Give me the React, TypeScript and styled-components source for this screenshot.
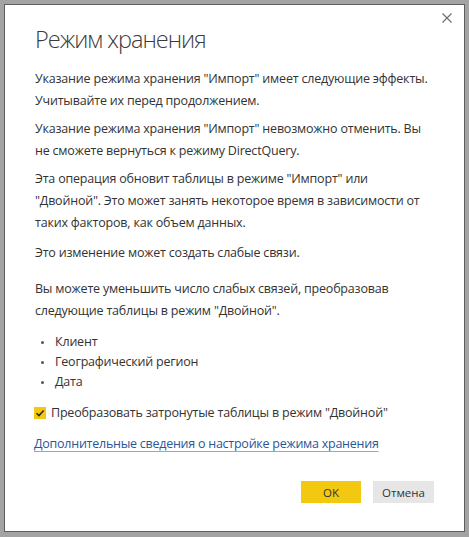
import React from "react";
import styled, { createGlobalStyle } from "styled-components";

const GlobalStyle = createGlobalStyle`
  html, body {
    margin: 0;
    padding: 0;
    background: #a3a3a3;
  }
  body {
    padding: 4px;
    font-family: "Open Sans", "Noto Sans", sans-serif;
  }
`;

const Dialog = styled.div`
  position: relative;
  box-sizing: border-box;
  width: 461px;
  height: 528px;
  background: #ffffff;
  border: 1px solid #5e5e5e;
  padding: 18px 20px 28px 30px;
  display: flex;
  flex-direction: column;
  color: #333333;
`;

const CloseButton = styled.button`
  position: absolute;
  top: 8px;
  right: 12px;
  width: 10px;
  height: 10px;
  padding: 0;
  border: none;
  background: transparent;
  display: block;
  cursor: pointer;
  svg {
    display: block;
  }
`;

const Title = styled.h1`
  margin: 0 0 13px 0;
  font-size: 23.5px;
  line-height: 32px;
  font-weight: 300;
  letter-spacing: -1px;
  color: #3b3b3b;
`;

const Paragraph = styled.p<{ $gap?: number }>`
  margin: ${(p) => p.$gap ?? 6}px 0 0 0;
  font-size: 12.5px;
  line-height: 22px;
  letter-spacing: -0.2px;
  white-space: nowrap;
`;

const BulletList = styled.ul`
  list-style: none;
  margin: 10px 0 0 0;
  padding: 0;
`;

const BulletItem = styled.li`
  position: relative;
  padding-left: 20px;
  font-size: 12.5px;
  line-height: 20px;
  letter-spacing: -0.2px;
  &::before {
    content: "";
    position: absolute;
    left: 6px;
    top: 9px;
    width: 3px;
    height: 3px;
    border-radius: 50%;
    background: #555555;
  }
`;

const CheckRow = styled.label`
  display: flex;
  align-items: center;
  gap: 5px;
  margin: 10px 0 0 -1px;
  font-size: 12.5px;
  line-height: 22px;
  letter-spacing: -0.2px;
  white-space: nowrap;
`;

const CheckBox = styled.span`
  width: 12px;
  height: 12px;
  background: #f2c811;
  display: flex;
  align-items: center;
  justify-content: center;
  flex: none;
`;

const LinkRow = styled.div`
  margin: 7px 0 0 -1px;
  line-height: 22px;
`;

const LearnLink = styled.a`
  font-size: 12.5px;
  letter-spacing: -0.25px;
  color: #2b5797;
  text-decoration: underline;
  text-decoration-color: #8fa8cf;
  text-underline-offset: 3px;
  white-space: nowrap;
`;

const Spacer = styled.div`
  flex: 1;
`;

const Footer = styled.div`
  display: flex;
  justify-content: flex-end;
  gap: 12px;
  padding-right: 10px;
`;

const Button = styled.button<{ $primary?: boolean }>`
  height: 22px;
  width: ${(p) => (p.$primary ? "60px" : "61px")};
  padding: 0;
  border: none;
  background: ${(p) => (p.$primary ? "#f2c811" : "#e6e6e6")};
  color: #333333;
  font-family: "Open Sans", "Noto Sans", sans-serif;
  font-size: 11.5px;
  cursor: pointer;
`;

export default function App() {
  return (
    <>
      <GlobalStyle />
      <Dialog>
        <CloseButton aria-label="Закрыть">
          <svg width="10" height="10" viewBox="0 0 10 10">
            <path d="M0.5 0.5 L9.5 9.5 M9.5 0.5 L0.5 9.5" stroke="#6b6b6b" strokeWidth="1.1" fill="none" />
          </svg>
        </CloseButton>
        <Title>Режим хранения</Title>
        <Paragraph $gap={0}>
          Указание режима хранения "Импорт" имеет следующие эффекты.
          <br />
          Учитывайте их перед продолжением.
        </Paragraph>
        <Paragraph>
          Указание режима хранения "Импорт" невозможно отменить. Вы
          <br />
          не сможете вернуться к режиму DirectQuery.
        </Paragraph>
        <Paragraph>
          Эта операция обновит таблицы в режиме "Импорт" или
          <br />
          "Двойной". Это может занять некоторое время в зависимости от
          <br />
          таких факторов, как объем данных.
        </Paragraph>
        <Paragraph $gap={8}>Это изменение может создать слабые связи.</Paragraph>
        <Paragraph $gap={14}>
          Вы можете уменьшить число слабых связей, преобразовав
          <br />
          следующие таблицы в режим "Двойной".
        </Paragraph>
        <BulletList>
          <BulletItem>Клиент</BulletItem>
          <BulletItem>Географический регион</BulletItem>
          <BulletItem>Дата</BulletItem>
        </BulletList>
        <CheckRow>
          <CheckBox>
            <svg width="10" height="10" viewBox="0 0 10 10">
              <path d="M1.5 5.2 L4 7.6 L8.6 2.4" stroke="#2b2b2b" strokeWidth="1.5" fill="none" />
            </svg>
          </CheckBox>
          Преобразовать затронутые таблицы в режим "Двойной"
        </CheckRow>
        <LinkRow>
          <LearnLink href="#">Дополнительные сведения о настройке режима хранения</LearnLink>
        </LinkRow>
        <Spacer />
        <Footer>
          <Button $primary>OK</Button>
          <Button>Отмена</Button>
        </Footer>
      </Dialog>
    </>
  );
}
